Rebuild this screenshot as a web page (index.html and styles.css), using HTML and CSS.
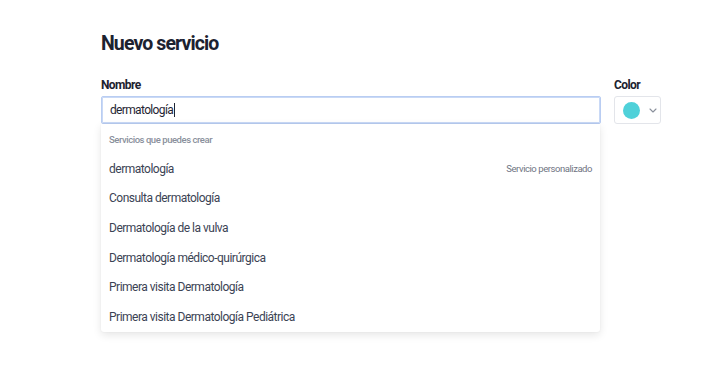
FILE: index.html
```html
<!DOCTYPE html>
<html lang="es">
<head>
<meta charset="utf-8">
<link rel="stylesheet" href="styles.css">
</head>
<body>
<div class="page">
  <h1 class="title">Nuevo servicio</h1>
  <div class="row">
    <div class="field name-field">
      <label class="label">Nombre</label>
      <div class="input">dermatología<span class="caret"></span></div>
      <div class="dropdown">
        <div class="dd-header">Servicios que puedes crear</div>
        <div class="dd-item"><span>dermatología</span><span class="dd-tag">Servicio personalizado</span></div>
        <div class="dd-item"><span>Consulta dermatología</span></div>
        <div class="dd-item"><span>Dermatología de la vulva</span></div>
        <div class="dd-item"><span>Dermatología médico-quirúrgica</span></div>
        <div class="dd-item"><span>Primera visita Dermatología</span></div>
        <div class="dd-item"><span>Primera visita Dermatología Pediátrica</span></div>
      </div>
    </div>
    <div class="field color-field">
      <label class="label">Color</label>
      <div class="color-box">
        <span class="swatch"></span>
        <svg class="chev" width="8" height="5" viewBox="0 0 8 5"><path d="M1 1 L4 4 L7 1" fill="none" stroke="#8a909c" stroke-width="1.1" stroke-linecap="round" stroke-linejoin="round"/></svg>
      </div>
    </div>
  </div>
</div>
</body>
</html>
```

FILE: styles.css
```css
* { box-sizing: border-box; }
html, body { margin: 0; padding: 0; background: #ffffff; }
body { font-family: Roboto, "Noto Sans", Arial, sans-serif; color: #1f2533; }
.page { padding: 31px 0 0 101px; width: 724px; height: 386px; }
.title { margin: 0; font-size: 19.5px; font-weight: 700; line-height: 26px; color: #1c2230; letter-spacing: -0.9px; }
.row { display: flex; gap: 13px; margin-top: 20px; }
.field { display: flex; flex-direction: column; }
.name-field { width: 500px; }
.color-field { width: 47px; }
.label { font-size: 12px; font-weight: 700; line-height: 16px; color: #1c2230; margin-bottom: 3px; letter-spacing: -0.6px; }
.input {
  height: 28px;
  border: 1px solid #b9cdf2;
  box-shadow: inset 0 0 0 1px #c9d9f6;
  border-radius: 2px;
  padding: 0 8px;
  display: flex; align-items: center;
  font-size: 12px; color: #1f2533; letter-spacing: -0.65px;
}
.caret { display: inline-block; width: 1px; height: 14px; background: #1f2533; margin-left: 1px; }
.dropdown {
  width: 499px;
  background: #fff;
  border-radius: 0 0 3px 3px;
  box-shadow: 0 3px 8px rgba(0,0,0,0.10), 0 0 2px rgba(0,0,0,0.06);
}
.dd-header { height: 30px; padding: 1px 8px 0; display: flex; align-items: center; font-size: 9.5px; font-weight: 500; color: #8a909c; letter-spacing: -0.45px; }
.dd-item { height: 29.6px; padding: 0 8px; display: flex; align-items: center; justify-content: space-between; font-size: 12px; color: #3b4354; letter-spacing: -0.5px; }
.dd-tag { font-size: 9.5px; color: #6f7583; letter-spacing: -0.45px; }
.color-box {
  height: 28px;
  border: 1px solid #e3e5ea;
  border-radius: 3px;
  display: flex; align-items: center;
  padding-left: 8px; gap: 9px;
}
.swatch { width: 17px; height: 17px; border-radius: 50%; background: #4fd1d9; }
.chev { display: block; }
```
